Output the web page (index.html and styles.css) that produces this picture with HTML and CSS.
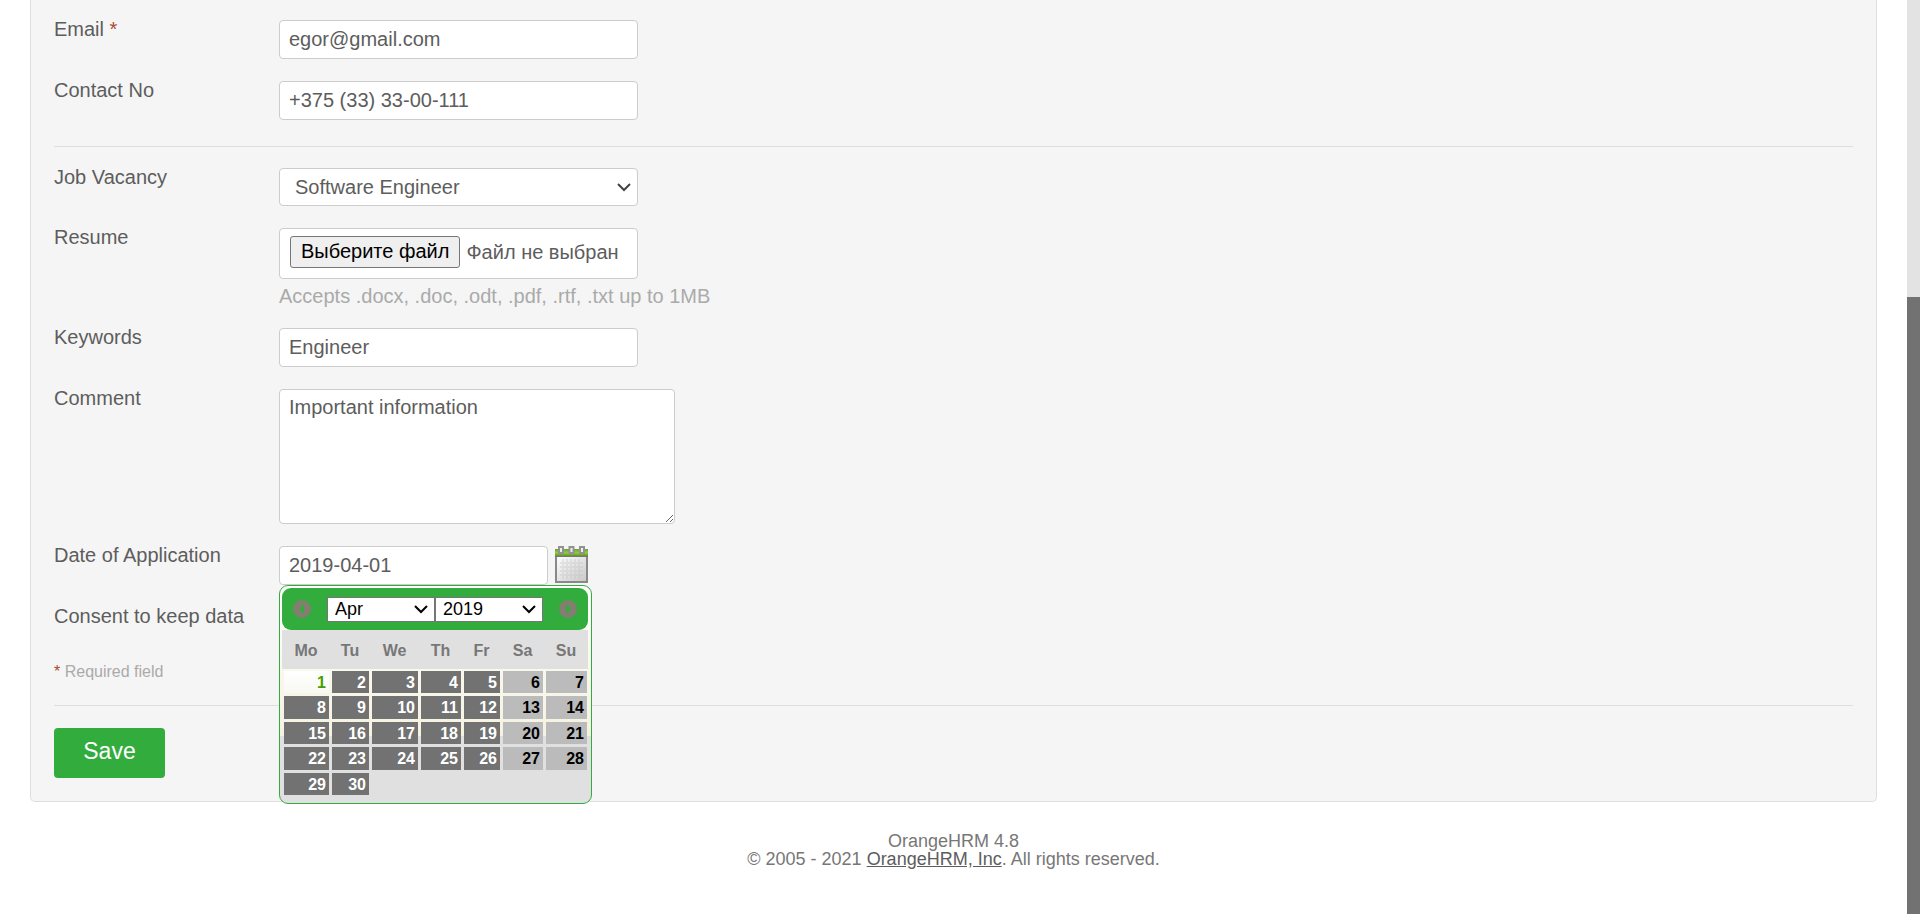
FILE: index.html
```html
<!DOCTYPE html>
<html lang="en">
<head>
<meta charset="utf-8">
<title>OrangeHRM</title>
<link rel="stylesheet" href="styles.css">
</head>
<body>
<div class="page">
<main class="content">
<form class="panel">
  <div class="fields">
    <div class="row"><label for="email">Email <em class="required">*</em></label><input class="field" id="email" type="text" value="egor@gmail.com"></div>
    <div class="row"><label for="contact">Contact No</label><input class="field" id="contact" type="text" value="+375 (33) 33-00-111"></div>
  </div>
  <div class="fields divided">
    <div class="row"><label for="vacancy">Job Vacancy</label>
      <div class="select-box"><select class="field vacancy" id="vacancy"><option>Software Engineer</option></select><svg class="chevron" viewBox="0 0 14 14"><path d="M1 4l6 6 6-6"/></svg></div>
    </div>
    <div class="row resume"><label for="choose">Resume</label>
      <div>
        <div class="field file"><button class="choose" id="choose" type="button">Выберите файл</button><span>Файл не выбран</span></div>
        <p class="hint">Accepts .docx, .doc, .odt, .pdf, .rtf, .txt up to 1MB</p>
      </div>
    </div>
    <div class="row"><label for="keywords">Keywords</label><input class="field" id="keywords" type="text" value="Engineer"></div>
    <div class="row"><label for="comment">Comment</label><textarea class="field comment" id="comment">Important information</textarea></div>
    <div class="row"><label for="date">Date of Application</label>
      <div class="date-box">
        <input class="field date" id="date" type="text" value="2019-04-01">
        <button class="trigger" type="button" aria-label="Calendar">
          <svg viewBox="0 0 33 37" width="33" height="37">
            <defs>
              <linearGradient id="paper" x1="0" y1="0" x2="1" y2="1"><stop offset="0" stop-color="#fff"/><stop offset="1" stop-color="#c8c8c8"/></linearGradient>
              <linearGradient id="band" x1="0" y1="0" x2="0" y2="1"><stop offset="0" stop-color="#6fa32c"/><stop offset=".55" stop-color="#93c94b"/><stop offset="1" stop-color="#5d9420"/></linearGradient>
            </defs>
            <rect x="1" y="10" width="31" height="26" fill="url(#paper)" stroke="#8b8889" stroke-width="2"/>
            <path d="M5 17h23M5 21h23M5 25h23M5 29h23M8 13v20M12 13v20M16 13v20M20 13v20M24 13v20" stroke="#bcbcbc" stroke-opacity=".3" stroke-width="2"/>
            <rect x="0" y="3" width="33" height="7" fill="url(#band)"/>
            <path d="M0 10.500h33" stroke="#777"/>
            <g fill="#eee" stroke="#929292" stroke-width="2"><rect x="4" y="1" width="4" height="6"/><rect x="14.500" y="1" width="4" height="6"/><rect x="25" y="1" width="4" height="6"/></g>
          </svg>
        </button>
        <div class="picker">
          <div class="picker-head">
            <button class="nav" type="button" aria-label="Prev"><svg viewBox="0 0 18 18"><circle cx="9" cy="9" r="9" fill="#847e71"/><path d="M11 4v10L6 9z" fill="#33ac3e"/></svg></button>
            <div class="picker-selects">
              <div class="mini"><select aria-label="Month"><option>Apr</option></select><svg class="chevron" viewBox="0 0 14 14"><path d="M1 4l6 6 6-6"/></svg></div>
              <div class="mini"><select aria-label="Year"><option>2019</option></select><svg class="chevron" viewBox="0 0 14 14"><path d="M1 4l6 6 6-6"/></svg></div>
            </div>
            <button class="nav" type="button" aria-label="Next"><svg viewBox="0 0 18 18"><circle cx="9" cy="9" r="9" fill="#847e71"/><path d="M7 4v10l5-5z" fill="#33ac3e"/></svg></button>
          </div>
          <table class="days">
            <colgroup><col class="c1"><col class="c2"><col class="c3"><col class="c4"><col class="c5"><col class="c4"><col class="c7"></colgroup>
            <thead><tr><th>Mo</th><th>Tu</th><th>We</th><th>Th</th><th>Fr</th><th>Sa</th><th>Su</th></tr></thead>
            <tbody>
              <tr><td class="current"><a href="#">1</a></td><td><a href="#">2</a></td><td><a href="#">3</a></td><td><a href="#">4</a></td><td><a href="#">5</a></td><td class="weekend"><a href="#">6</a></td><td class="weekend"><a href="#">7</a></td></tr>
              <tr><td><a href="#">8</a></td><td><a href="#">9</a></td><td><a href="#">10</a></td><td><a href="#">11</a></td><td><a href="#">12</a></td><td class="weekend"><a href="#">13</a></td><td class="weekend"><a href="#">14</a></td></tr>
              <tr><td><a href="#">15</a></td><td><a href="#">16</a></td><td><a href="#">17</a></td><td><a href="#">18</a></td><td><a href="#">19</a></td><td class="weekend"><a href="#">20</a></td><td class="weekend"><a href="#">21</a></td></tr>
              <tr><td><a href="#">22</a></td><td><a href="#">23</a></td><td><a href="#">24</a></td><td><a href="#">25</a></td><td><a href="#">26</a></td><td class="weekend"><a href="#">27</a></td><td class="weekend"><a href="#">28</a></td></tr>
              <tr><td><a href="#">29</a></td><td><a href="#">30</a></td></tr>
            </tbody>
          </table>
        </div>
      </div>
    </div>
    <div class="row consent"><label for="consent">Consent to keep data</label><input id="consent" type="checkbox"></div>
    <p class="note"><em class="required">*</em> Required field</p>
  </div>
  <div class="actions"><button class="save" type="button">Save</button></div>
</form>
<footer class="footer">OrangeHRM 4.8<br>© 2005 - 2021 <a href="#">OrangeHRM, Inc</a>. All rights reserved.</footer>
</main>
<div class="scrollbar"><div class="thumb"></div></div>
</div>
</body>
</html>
```
FILE: styles.css
```css
* { box-sizing: border-box; }
body { margin: 0; background: #fff; color: #5d5d5d; font: 20px/22px "Liberation Sans", Arial, sans-serif; }
input, select, textarea, button { font: inherit; color: inherit; margin: 0; }
p { margin: 0; }
.page { display: flex; min-height: 100vh; }
.content { flex: 1; padding: 0 30px; }
.panel { background: #f5f5f5; border: 1px solid #dedede; border-top: 0; border-radius: 0 0 5px 5px; padding: 20px 23px 23px; }
.fields { display: flex; flex-direction: column; gap: 22px; padding-bottom: 26px; }
.divided { border-top: 1px solid #dedede; padding: 21px 0 22px; }
.row { display: grid; grid-template-columns: 225px auto; justify-content: start; align-items: start; }
.row label { line-height: 18px; }
.required { color: #aa4935; font-style: normal; }
.field { display: block; width: 359px; height: 39px; padding: 0 9px; border: 1px solid #ccc; border-radius: 4px; background: #fff; }
.select-box, .mini { position: relative; }
select { appearance: none; }
.field.vacancy { height: 38px; padding: 0 15px; }
.chevron { position: absolute; right: 7px; top: 12px; width: 14px; height: 14px; fill: none; stroke: #444; stroke-width: 2; pointer-events: none; }
.field.file { height: 51px; padding: 7px 10px; display: flex; align-items: flex-start; gap: 6px; line-height: 32px; }
.choose { height: 32px; padding: 0 10px 3px; border: 1px solid #767676; border-radius: 3px; background: #efefef; color: #000; line-height: 26px; }
.hint { color: #aaa; line-height: 22px; padding-top: 6px; }
.resume { margin-bottom: -1px; }
.field.comment { width: 396px; height: 135px; padding: 6px 9px; resize: both; }
.date-box { position: relative; display: flex; gap: 7px; }
.field.date { width: 269px; }
.trigger { border: 0; padding: 0; background: none; height: 37px; }
.trigger svg { display: block; }
.picker { position: absolute; left: 0; top: 39px; width: 313px; padding: 2px; border: 1px solid #33ac3e; border-radius: 9px; font-size: 16px; background: linear-gradient(#fff, #f5f2e1) 0 0 / 100% 150px no-repeat #e0e0e0; }
.picker-head { display: flex; align-items: center; justify-content: space-between; height: 42px; padding: 0 11px; margin-right: 1px; background: #33ac3e; border-radius: 9px; }
.nav { width: 18px; height: 18px; padding: 0; border: 0; background: none; }
.nav svg { display: block; }
.picker-selects { display: flex; }
.mini select { display: block; width: 108px; height: 25px; padding: 0 7px; border: 1px solid #767676; border-radius: 0; background: #fff; color: #000; font-size: 18px; line-height: 22px; }
.mini .chevron { top: 5px; stroke: #000; }
.days { table-layout: fixed; width: 306px; border-collapse: separate; border-spacing: 0; margin-bottom: 5px; }
.c1 { width: 48px; } .c2 { width: 40px; } .c3 { width: 49px; } .c4 { width: 43px; } .c5 { width: 39px; } .c7 { width: 44px; }
.days th { height: 39px; padding: 2px 0 0; background: #e0e0e0; color: #777; text-align: center; }
.days td { padding: 2px 1px 1px 2px; }
.days td a { display: block; height: 22px; line-height: 24px; padding-right: 3px; background: #727272; color: #fff; font-weight: bold; text-align: right; text-decoration: none; }
.days tr:nth-child(even) a { height: 23px; }
.days .weekend a { background: #bbb; color: #000; }
.days .current a { background: linear-gradient(#fff, #f8f9f2); color: #459e00; }
.row.consent { height: 28px; }
.note { color: #aaa; font-size: 16px; line-height: 18px; padding: 6px 0 2px; }
.actions { border-top: 1px solid #dedede; padding-top: 22px; }
.save { display: block; min-width: 111px; height: 50px; padding: 0 6px 4px; border: 0; border-radius: 4px; background: #33ac3e; color: #fff; font-size: 23px; }
.footer { padding-top: 30px; text-align: center; font-size: 18px; line-height: 18px; color: #777; }
.footer a { color: #5d5d5d; }
.scrollbar { width: 13px; background: #e3e3e3; display: flex; flex-direction: column; justify-content: flex-end; }
.thumb { height: 67.5%; background: #727272; }
```
